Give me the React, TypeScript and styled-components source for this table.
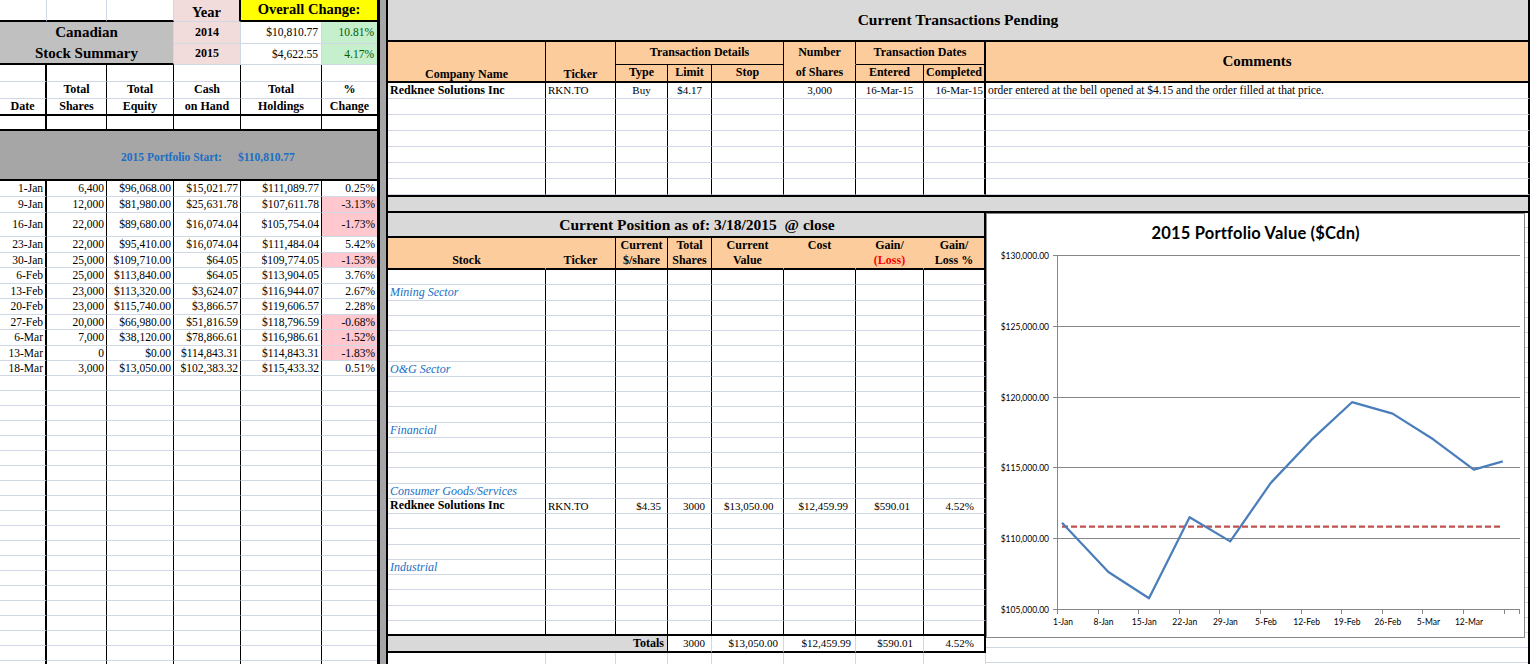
import React from 'react';
import styled, { createGlobalStyle } from 'styled-components';

const GRID = '#d0d7e5';
const LIGHT = `1px solid ${GRID}`;
const BLACK1 = '1px solid #000';
const BLACK2 = '2px solid #000';
const PEACH = '#fdcc9c';
const PEACH_LINE = `1px solid ${PEACH}`;
const PINK = '#f2dcdb';
const BLUE = '#1a6fc4';
const SERIF = '"Liberation Serif", "Times New Roman", serif';

const GlobalStyle = createGlobalStyle`
  html, body { margin: 0; padding: 0; background: #fff; }
  body { font-family: ${SERIF}; color: #000; overflow: hidden; }
`;

type Align = 'left' | 'center' | 'right';
type VAlign = 'top' | 'middle' | 'bottom';

type CellProps = {
  $span?: number;
  $rows?: number;
  $align?: Align;
  $valign?: VAlign;
  $bg?: string;
  $right?: string;
  $bottom?: string;
  $bold?: boolean;
  $italic?: boolean;
  $size?: number;
  $color?: string;
  $pad?: number;
};

const Cell = styled.div<CellProps>`
  box-sizing: border-box;
  min-width: 0;
  overflow: hidden;
  white-space: nowrap;
  display: flex;
  flex-direction: column;
  justify-content: ${(p) => (p.$valign === 'top' ? 'flex-start' : p.$valign === 'bottom' ? 'flex-end' : 'center')};
  text-align: ${(p) => p.$align ?? 'left'};
  grid-column: span ${(p) => p.$span ?? 1};
  grid-row: span ${(p) => p.$rows ?? 1};
  padding: 0 ${(p) => p.$pad ?? 3}px;
  background: ${(p) => p.$bg ?? '#fff'};
  border-right: ${(p) => p.$right ?? LIGHT};
  border-bottom: ${(p) => p.$bottom ?? LIGHT};
  font-size: ${(p) => p.$size ?? 11.5}px;
  font-weight: ${(p) => (p.$bold ? 700 : 400)};
  font-style: ${(p) => (p.$italic ? 'italic' : 'normal')};
  color: ${(p) => p.$color ?? '#000'};
  line-height: 1.1;
`;

const Lines = styled.span<{ $lh?: number }>`
  display: block;
  line-height: ${(p) => p.$lh ?? 16}px;
`;

const Red = styled.span`
  color: #ff0000;
`;

const Sheet = styled.div`
  display: flex;
  width: 1533px;
  height: 664px;
  overflow: hidden;
  background: #fff;
`;

/* ---------- left: stock summary ---------- */

const SummaryGrid = styled.div`
  width: 377px;
  flex: none;
  display: grid;
  grid-template-columns: 47px 60px 67px 67px 81px 55px;
  grid-template-rows: 22px 22px 21px 17px 17px 17px 15px 50px 16px 16px 24px 16px 15px 16px 15px 16px 15px 16px 15px 15px;
  grid-auto-rows: 15px;
  align-content: start;
  overflow: hidden;
`;

const StartBand = styled.div`
  grid-column: span 6;
  box-sizing: border-box;
  background: #a6a6a6;
  border-bottom: 2px solid #000;
  display: flex;
  align-items: center;
  gap: 16px;
  padding: 4px 0 0 121px;
  color: ${BLUE};
  font-weight: 700;
  font-size: 11.5px;
`;

const Divider = styled.div`
  width: 11px;
  flex: none;
  box-sizing: border-box;
  background: #a6a6a6;
  border-left: 3px solid #000;
  border-right: 2px solid #000;
`;

/* ---------- right: transactions / position / chart ---------- */

const RightPane = styled.div`
  width: 1145px;
  flex: none;
  display: flex;
  flex-direction: column;
`;

const SectionTitle = styled.div<{ $height: number; $shift?: number }>`
  box-sizing: border-box;
  height: ${(p) => p.$height}px;
  flex: none;
  background: #d9d9d9;
  border-bottom: 2px solid #000;
  border-right: 2px solid #000;
  display: flex;
  align-items: center;
  justify-content: center;
  padding-left: ${(p) => p.$shift ?? 0}px;
  font-size: 15.5px;
  font-weight: 700;
  white-space: pre;
`;

const Block = styled.div`
  width: 1142px;
  display: flex;
  flex-direction: column;
`;

const TxGrid = styled.div`
  display: grid;
  grid-template-columns: 158px 70px 52px 44px 72px 72px 68px 62px 1fr;
  grid-template-rows: 23px 18px repeat(7, 16px);
`;

const SplitBand = styled.div`
  box-sizing: border-box;
  height: 18px;
  background: #d9d9d9;
  border-top: 2px solid #000;
  border-bottom: 2px solid #000;
  border-right: 2px solid #000;
`;

const LowerRow = styled.div`
  display: flex;
  flex: 1;
  min-height: 0;
`;

const PositionBlock = styled.div`
  width: 598px;
  flex: none;
  display: flex;
  flex-direction: column;
`;

const PosGrid = styled.div`
  display: grid;
  grid-template-columns: 158px 70px 52px 44px 72px 72px 68px 62px;
  grid-template-rows: 32px repeat(24, 15.25px) 17px 15px;
`;

const ChartColumn = styled.div`
  flex: 1;
  box-sizing: border-box;
  border-right: 2px solid #000;
  background: repeating-linear-gradient(to bottom, #fff 0 14px, ${GRID} 14px 15px);
`;

const ChartBox = styled.div`
  box-sizing: border-box;
  width: 539px;
  height: 425px;
  border: 1px solid #868686;
  background: #fff;
  display: flex;
  flex-direction: column;
`;

const ChartTitle = styled.div`
  height: 36px;
  flex: none;
  display: flex;
  align-items: center;
  justify-content: center;
  padding-top: 2px;
  box-sizing: border-box;
  font-family: Lato, "Open Sans", sans-serif;
  font-weight: 700;
  font-size: 16.5px;
  letter-spacing: 0.2px;
`;

const Filler = styled.div`
  width: 3px;
  flex: none;
`;

/* ---------- data ---------- */

const summaryRows: string[][] = [
  ['1-Jan', '6,400', '$96,068.00', '$15,021.77', '$111,089.77', '0.25%'],
  ['9-Jan', '12,000', '$81,980.00', '$25,631.78', '$107,611.78', '-3.13%'],
  ['16-Jan', '22,000', '$89,680.00', '$16,074.04', '$105,754.04', '-1.73%'],
  ['23-Jan', '22,000', '$95,410.00', '$16,074.04', '$111,484.04', '5.42%'],
  ['30-Jan', '25,000', '$109,710.00', '$64.05', '$109,774.05', '-1.53%'],
  ['6-Feb', '25,000', '$113,840.00', '$64.05', '$113,904.05', '3.76%'],
  ['13-Feb', '23,000', '$113,320.00', '$3,624.07', '$116,944.07', '2.67%'],
  ['20-Feb', '23,000', '$115,740.00', '$3,866.57', '$119,606.57', '2.28%'],
  ['27-Feb', '20,000', '$66,980.00', '$51,816.59', '$118,796.59', '-0.68%'],
  ['6-Mar', '7,000', '$38,120.00', '$78,866.61', '$116,986.61', '-1.52%'],
  ['13-Mar', '0', '$0.00', '$114,843.31', '$114,843.31', '-1.83%'],
  ['18-Mar', '3,000', '$13,050.00', '$102,383.32', '$115,433.32', '0.51%'],
];

const colRight = [BLACK2, BLACK1, BLACK1, BLACK1, BLACK1, 'none'];

const days = [0, 8, 15, 22, 29, 36, 43, 50, 57, 64, 71, 76];
const holdings = summaryRows.map((r) => parseFloat(r[4].replace(/[$,]/g, '')));
const yOf = (v: number) => 359 - (v - 105000) * 0.01416;
const xOf = (d: number) => 75 + d * 5.8;
const yTicks = [130000, 125000, 120000, 115000, 110000, 105000];
const xLabels = ['1-Jan', '8-Jan', '15-Jan', '22-Jan', '29-Jan', '5-Feb', '12-Feb', '19-Feb', '26-Feb', '5-Mar', '12-Mar'];

const sectors: Record<number, string> = {
  1: 'Mining Sector',
  6: 'O&G Sector',
  10: 'Financial',
  14: 'Consumer Goods/Services',
  19: 'Industrial',
};

const posRight = [BLACK1, BLACK1, BLACK1, BLACK1, BLACK1, BLACK1, BLACK1, BLACK2];
const txRight = [BLACK1, BLACK1, BLACK1, BLACK1, BLACK1, BLACK1, BLACK1, BLACK2, BLACK2];

const Summary: React.FC = () => (
  <SummaryGrid>
    <Cell $bottom={BLACK2} />
    <Cell $bottom={BLACK2} />
    <Cell $bottom={BLACK2} />
    <Cell $bg={PINK} $right={BLACK2} $bold $size={14.5} $align="center" $valign="bottom">Year</Cell>
    <Cell $span={2} $bg="#ffff00" $right="none" $bottom={BLACK2} $bold $size={14.5} $align="center">
      Overall Change:
    </Cell>

    <Cell $span={3} $rows={2} $bg="#c0c0c0" $bottom={BLACK2} $bold $size={15} $align="center">
      <Lines $lh={21}>Canadian<br />Stock Summary</Lines>
    </Cell>
    <Cell $bg={PINK} $bold $size={12} $align="center">2014</Cell>
    <Cell $align="right">$10,810.77</Cell>
    <Cell $bg="#c6efce" $color="#006100" $align="right" $right="none">10.81%</Cell>
    <Cell $bg={PINK} $bold $size={12} $align="center">2015</Cell>
    <Cell $align="right">$4,622.55</Cell>
    <Cell $bg="#c6efce" $color="#006100" $align="right" $right="none">4.17%</Cell>

    {[
      ['', '', '', '', '', ''],
      ['', 'Total', 'Total', 'Cash', 'Total', '%'],
      ['Date', 'Shares', 'Equity', 'on Hand', 'Holdings', 'Change'],
      ['', '', '', '', '', ''],
    ].map((row, r) =>
      row.map((label, c) => (
        <Cell
          key={`h${r}-${c}`}
          $right={colRight[c]}
          $bottom={r >= 2 ? BLACK2 : LIGHT}
          $bold
          $size={12}
          $align="center"
        >
          {label}
        </Cell>
      )),
    )}

    <StartBand>
      <span>2015 Portfolio Start:</span>
      <span>$110,810.77</span>
    </StartBand>

    {summaryRows.map((row, r) =>
      row.map((value, c) => {
        const negative = c === 5 && value.startsWith('-');
        return (
          <Cell key={`d${r}-${c}`} $right={colRight[c]} $align="right" $pad={2} $bg={negative ? '#ffc7ce' : '#fff'}>
            {value}
          </Cell>
        );
      }),
    )}

    {Array.from({ length: 20 }).map((_, r) =>
      colRight.map((right, c) => <Cell key={`b${r}-${c}`} $right={right} />),
    )}
  </SummaryGrid>
);

const Transactions: React.FC = () => (
  <Block>
    <SectionTitle $height={42}>Current Transactions Pending</SectionTitle>
    <TxGrid>
      <Cell $rows={2} $bg={PEACH} $right={BLACK1} $bottom={BLACK2} $bold $size={12} $align="center" $valign="bottom">Company Name</Cell>
      <Cell $rows={2} $bg={PEACH} $right={BLACK1} $bottom={BLACK2} $bold $size={12} $align="center" $valign="bottom">Ticker</Cell>
      <Cell $span={3} $bg={PEACH} $right={BLACK1} $bottom={BLACK1} $bold $size={12} $align="center">Transaction Details</Cell>
      <Cell $bg={PEACH} $right={BLACK1} $bottom={PEACH_LINE} $bold $size={12} $align="center">Number</Cell>
      <Cell $span={2} $bg={PEACH} $right={BLACK2} $bottom={BLACK1} $bold $size={12} $align="center">Transaction Dates</Cell>
      <Cell $rows={2} $bg={PEACH} $right={BLACK2} $bottom={BLACK2} $bold $size={15} $align="center">Comments</Cell>
      {['Type', 'Limit', 'Stop', 'of Shares', 'Entered', 'Completed'].map((label, i) => (
        <Cell key={label} $bg={PEACH} $right={i === 5 ? BLACK2 : BLACK1} $bottom={BLACK2} $bold $size={12} $align="center" $pad={1}>
          {label}
        </Cell>
      ))}

      <Cell $right={BLACK1} $bold $size={12} $pad={2}>Redknee Solutions Inc</Cell>
      <Cell $right={BLACK1} $size={11} $pad={2}>RKN.TO</Cell>
      <Cell $right={BLACK1} $size={11} $align="center">Buy</Cell>
      <Cell $right={BLACK1} $size={11} $align="center">$4.17</Cell>
      <Cell $right={BLACK1} />
      <Cell $right={BLACK1} $size={11} $align="center">3,000</Cell>
      <Cell $right={BLACK1} $size={11} $align="center">16-Mar-15</Cell>
      <Cell $right={BLACK2} $size={11} $align="right" $pad={1}>16-Mar-15</Cell>
      <Cell $right={BLACK2} $size={11.5} $pad={2}>order entered at the bell opened at $4.15 and the order filled at that price.</Cell>

      {Array.from({ length: 6 }).map((_, r) =>
        txRight.map((right, c) => <Cell key={`t${r}-${c}`} $right={right} />),
      )}
    </TxGrid>
    <SplitBand />
  </Block>
);

const posHead: { label: React.ReactNode; valign: VAlign; right: string }[] = [
  { label: 'Stock', valign: 'bottom', right: PEACH_LINE },
  { label: 'Ticker', valign: 'bottom', right: BLACK1 },
  { label: <>Current<br />$/share</>, valign: 'middle', right: BLACK1 },
  { label: <>Total<br />Shares</>, valign: 'middle', right: BLACK1 },
  { label: <>Current<br />Value</>, valign: 'middle', right: PEACH_LINE },
  { label: 'Cost', valign: 'top', right: PEACH_LINE },
  { label: <>Gain/<br /><Red>(Loss)</Red></>, valign: 'middle', right: PEACH_LINE },
  { label: <>Gain/<br />Loss %</>, valign: 'middle', right: BLACK2 },
];

const redknee: { value: string; align: Align; bold?: boolean; pad?: number }[] = [
  { value: 'Redknee Solutions Inc', align: 'left', bold: true, pad: 2 },
  { value: 'RKN.TO', align: 'left', pad: 2 },
  { value: '$4.35', align: 'right', pad: 6 },
  { value: '3000', align: 'right', pad: 6 },
  { value: '$13,050.00', align: 'right', pad: 12 },
  { value: '$12,459.99', align: 'right', pad: 7 },
  { value: '$590.01', align: 'right', pad: 13 },
  { value: '4.52%', align: 'right', pad: 10 },
];

const totals: { value: string; pad: number }[] = [
  { value: '3000', pad: 6 },
  { value: '$13,050.00', pad: 5 },
  { value: '$12,459.99', pad: 4 },
  { value: '$590.01', pad: 10 },
  { value: '4.52%', pad: 10 },
];

const Position: React.FC = () => (
  <PositionBlock>
    <SectionTitle $height={25} $shift={22}>Current Position as of: 3/18/2015  @ close</SectionTitle>
    <PosGrid>
      {posHead.map((h, i) => (
        <Cell key={`ph${i}`} $bg={PEACH} $right={h.right} $bottom={BLACK2} $bold $size={12} $align="center" $valign={h.valign} $pad={1}>
          <Lines $lh={15}>{h.label}</Lines>
        </Cell>
      ))}

      {Array.from({ length: 24 }).map((_, r) =>
        posRight.map((right, c) => {
          const bottom = r === 23 ? BLACK2 : LIGHT;
          if (c === 0 && sectors[r]) {
            return (
              <Cell key={`p${r}-${c}`} $right={right} $bottom={bottom} $italic $size={12} $color={BLUE} $pad={2} $valign="bottom">
                {sectors[r]}
              </Cell>
            );
          }
          if (r === 15) {
            const d = redknee[c];
            return (
              <Cell key={`p${r}-${c}`} $right={right} $bottom={bottom} $size={d.bold ? 12 : 11} $bold={d.bold} $align={d.align} $pad={d.pad ?? 3}>
                {d.value}
              </Cell>
            );
          }
          return <Cell key={`p${r}-${c}`} $right={right} $bottom={bottom} />;
        }),
      )}

      <Cell $span={3} $bg="#d9d9d9" $right={BLACK1} $bottom={BLACK2} $bold $size={12} $align="right" $pad={3}>Totals</Cell>
      {totals.map((t, i) => (
        <Cell key={`tot${i}`} $right={i === 4 ? BLACK2 : LIGHT} $bottom={BLACK2} $size={11} $align="right" $pad={t.pad}>
          {t.value}
        </Cell>
      ))}

      {posRight.map((_, c) => <Cell key={`last${c}`} />)}
    </PosGrid>
  </PositionBlock>
);

const PortfolioChart: React.FC = () => {
  const pts = days.map((d, i) => `${xOf(d).toFixed(1)},${yOf(holdings[i]).toFixed(1)}`).join(' ');
  const start = yOf(110810.77);
  return (
    <ChartBox>
      <ChartTitle>2015 Portfolio Value ($Cdn)</ChartTitle>
      <svg width="537" height="387" viewBox="0 0 537 387" fontFamily="Lato, 'Open Sans', sans-serif">
        {yTicks.map((v) => {
          const y = Math.round(yOf(v)) + 0.5;
          return (
            <g key={v}>
              <line x1={66} x2={533} y1={y} y2={y} stroke="#868686" strokeWidth={1} />
              <text x={62} y={y + 3} fontSize={8.5} textAnchor="end" fill="#000">
                ${v.toLocaleString('en-US')}.00
              </text>
            </g>
          );
        })}
        <line x1={70.5} x2={70.5} y1={5} y2={360} stroke="#868686" strokeWidth={1} />
        {Array.from({ length: 12 }).map((_, k) => {
          const x = Math.round(70 + k * 40.6) + 0.5;
          return <line key={k} x1={x} x2={x} y1={359} y2={364} stroke="#868686" strokeWidth={1} />;
        })}
        <line x1={532.5} x2={532.5} y1={359} y2={364} stroke="#868686" strokeWidth={1} />
        {xLabels.map((label, k) => (
          <text key={label} x={76 + k * 40.6} y={375} fontSize={8.5} textAnchor="middle" fill="#000">
            {label}
          </text>
        ))}
        <line x1={xOf(0)} x2={xOf(76)} y1={start} y2={start} stroke="#c0504d" strokeWidth={2.25} strokeDasharray="6 3" />
        <polyline points={pts} fill="none" stroke="#4a7ebb" strokeWidth={2.25} strokeLinejoin="round" />
      </svg>
    </ChartBox>
  );
};

const App: React.FC = () => (
  <>
    <GlobalStyle />
    <Sheet>
      <Summary />
      <Divider />
      <RightPane>
        <Transactions />
        <LowerRow>
          <Position />
          <ChartColumn>
            <PortfolioChart />
          </ChartColumn>
          <Filler />
        </LowerRow>
      </RightPane>
    </Sheet>
  </>
);

export default App;
